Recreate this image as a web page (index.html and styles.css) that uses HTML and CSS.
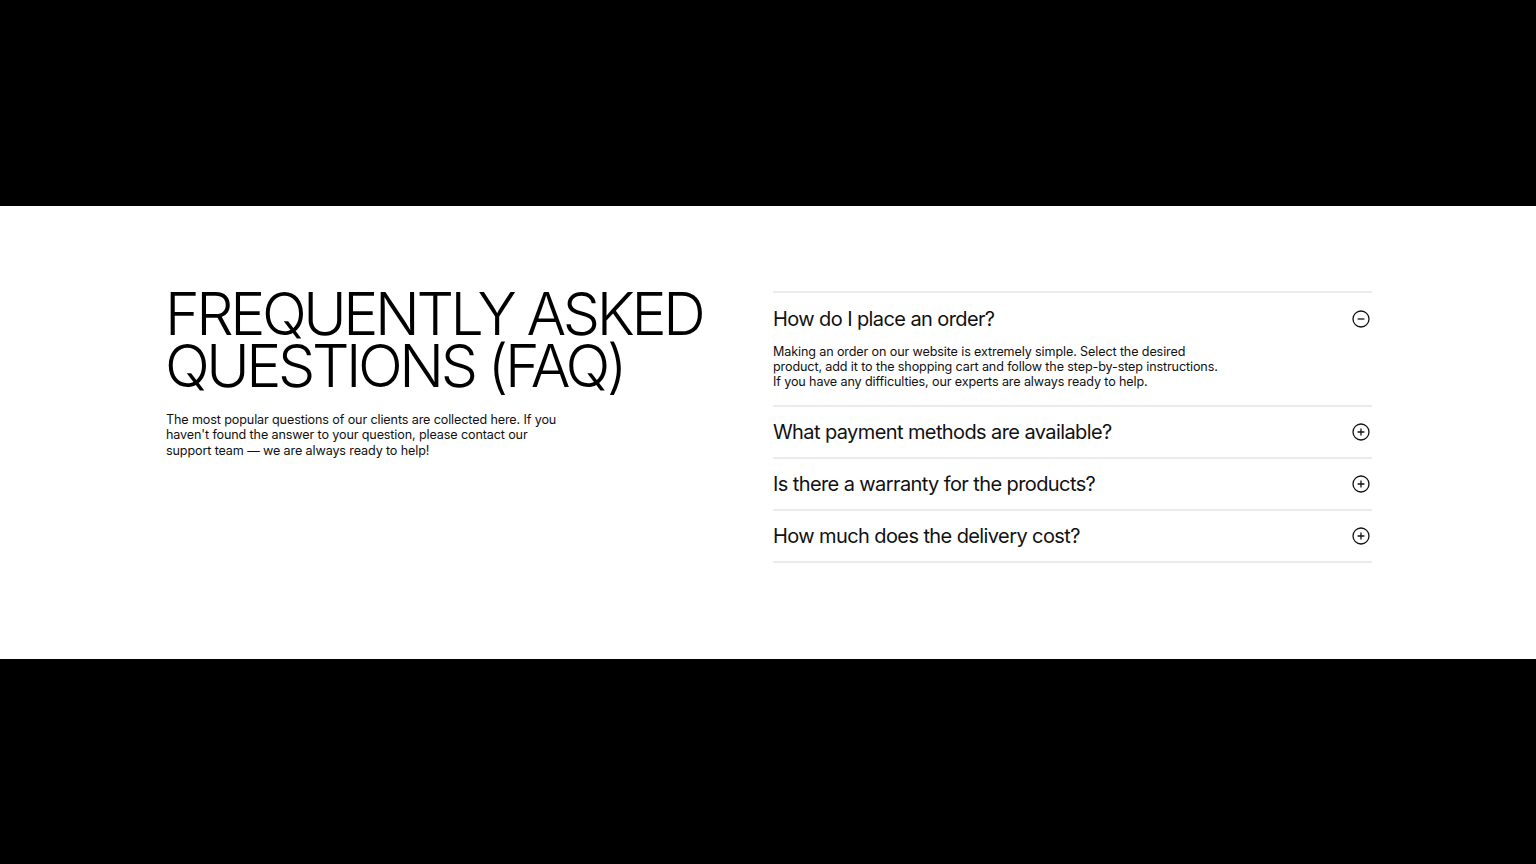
FILE: index.html
```html
<!DOCTYPE html>
<html lang="en">
<head>
<meta charset="utf-8">
<title>FAQ</title>
<link rel="stylesheet" href="styles.css">
</head>
<body>
<section class="faq">
  <div class="faq-inner">
    <div class="faq-intro">
      <h1 class="faq-title">FREQUENTLY ASKED<br>QUESTIONS (FAQ)</h1>
      <p class="faq-lead">The most popular questions of our clients are collected here. If you haven't found the answer to your question, please contact our support team — we are always ready to help!</p>
    </div>
    <div class="faq-list">
      <div class="faq-item open">
        <div class="faq-q">
          <span>How do I place an order?</span>
          <svg class="faq-icon" viewBox="0 0 18 18" width="18" height="18"><circle cx="9" cy="9" r="8" fill="none" stroke="#111" stroke-width="1.3"/><path d="M5.6 9h6.8" stroke="#111" stroke-width="1.3" fill="none"/></svg>
        </div>
        <div class="faq-a">Making an order on our website is extremely simple. Select the desired product, add it to the shopping cart and follow the step-by-step instructions. If you have any difficulties, our experts are always ready to help.</div>
      </div>
      <div class="faq-item">
        <div class="faq-q">
          <span>What payment methods are available?</span>
          <svg class="faq-icon" viewBox="0 0 18 18" width="18" height="18"><circle cx="9" cy="9" r="8" fill="none" stroke="#111" stroke-width="1.3"/><path d="M5.6 9h6.8M9 5.6v6.8" stroke="#111" stroke-width="1.3" fill="none"/></svg>
        </div>
      </div>
      <div class="faq-item">
        <div class="faq-q">
          <span>Is there a warranty for the products?</span>
          <svg class="faq-icon" viewBox="0 0 18 18" width="18" height="18"><circle cx="9" cy="9" r="8" fill="none" stroke="#111" stroke-width="1.3"/><path d="M5.6 9h6.8M9 5.6v6.8" stroke="#111" stroke-width="1.3" fill="none"/></svg>
        </div>
      </div>
      <div class="faq-item">
        <div class="faq-q">
          <span>How much does the delivery cost?</span>
          <svg class="faq-icon" viewBox="0 0 18 18" width="18" height="18"><circle cx="9" cy="9" r="8" fill="none" stroke="#111" stroke-width="1.3"/><path d="M5.6 9h6.8M9 5.6v6.8" stroke="#111" stroke-width="1.3" fill="none"/></svg>
        </div>
      </div>
    </div>
  </div>
</section>
</body>
</html>
```
FILE: styles.css
```css
html, body {
  margin: 0;
  padding: 0;
  background: #000;
}
body {
  min-height: 100vh;
  font-family: Inter, "Liberation Sans", sans-serif;
  color: #000;
}
.faq {
  margin-top: 206px;
  background: #fff;
  padding: 85px 0 96px;
}
.faq-inner {
  width: 1208px;
  margin: 0 auto;
  padding-left: 2px;
  box-sizing: border-box;
  display: grid;
  grid-template-columns: 1fr 599px;
}
.faq-title {
  margin: -3px 0 0 -1px;
  font-size: 59px;
  line-height: 52px;
  font-weight: 300;
  letter-spacing: -0.058em;
  color: #000;
}
.faq-lead {
  margin: 20px 0 0;
  width: 400px;
  font-size: 12.6px;
  line-height: 15.4px;
  letter-spacing: -0.01em;
  color: #111;
}
.faq-list {
  border-top: 2px solid #ebebeb;
}
.faq-item {
  border-bottom: 2px solid #ebebeb;
}
.faq-q {
  height: 50px;
  display: flex;
  align-items: center;
  justify-content: space-between;
  font-size: 20px;
  color: #111;
  letter-spacing: -0.03em;
}
.faq-item.open .faq-q {
  padding-top: 1px;
}
.faq-icon {
  margin-right: 2px;
  flex: none;
}
.faq-a {
  width: 452px;
  font-size: 12.6px;
  line-height: 15.2px;
  letter-spacing: -0.01em;
  color: #111;
  padding: 0 0 15px;
}
```
